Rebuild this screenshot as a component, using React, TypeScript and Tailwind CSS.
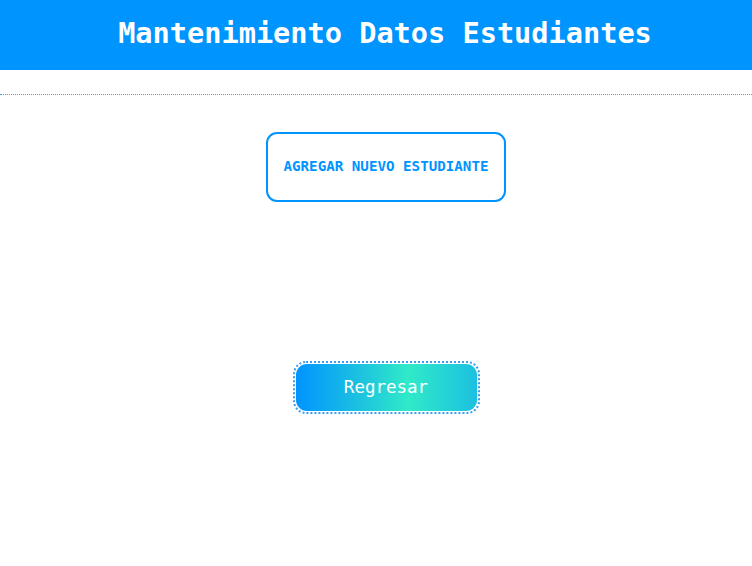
import React from "react";

export default function App() {
  const mono = { fontFamily: '"DejaVu Sans Mono", "Liberation Mono", monospace' };
  return (
    <div className="w-[752px] h-[566px] bg-white" style={mono}>
      <header className="h-[70px] bg-[#0094ff] flex items-center justify-center pl-[18px] pb-[3px]">
        <h1 className="text-[28.6px] font-bold text-white leading-none">Mantenimiento Datos Estudiantes</h1>
      </header>
      <div className="mt-[24px] border-t border-dotted border-[#2aa8ff]" />
      <main className="flex flex-col items-center pl-[20px]">
        <button className="mt-[37px] w-[240px] h-[70px] border-2 border-[#0094ff] rounded-[11px] bg-white text-[#0094ff] text-[14.2px] font-bold flex items-center justify-center">
          AGREGAR NUEVO ESTUDIANTE
        </button>
        <div className="mt-[159px] p-[1px] border-2 border-dotted border-[#3a9cf0] rounded-[13px]">
          <button className="w-[181px] h-[47px] rounded-[11px] text-white text-[17.5px] bg-[linear-gradient(to_right,#0094ff_0%,#1cc2e0_35%,#30eac8_62%,#1cc0e0_100%)] flex items-center justify-center pb-[1px]">
            Regresar
          </button>
        </div>
      </main>
    </div>
  );
}
